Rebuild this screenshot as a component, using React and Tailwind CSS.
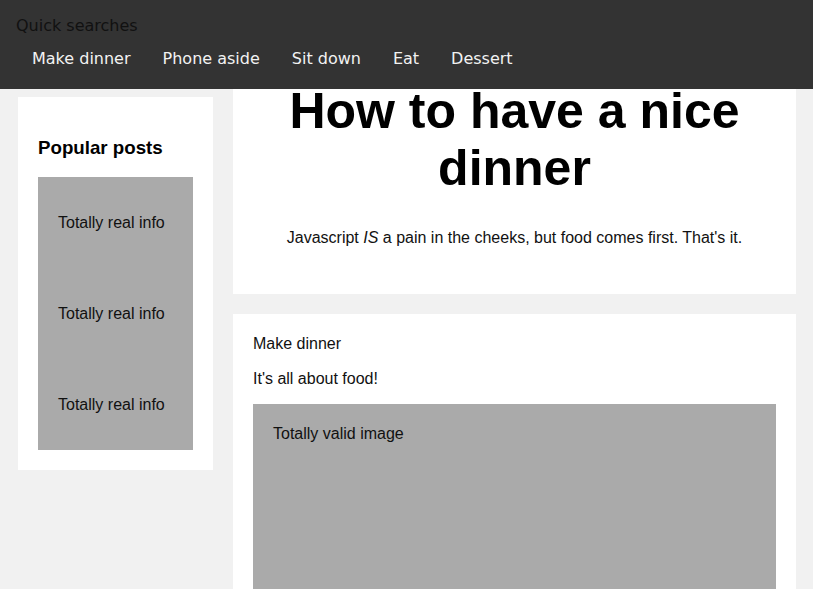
export default function App() {
  const links = ["Make dinner", "Phone aside", "Sit down", "Eat", "Dessert"];
  return (
    <div className="min-h-screen bg-[#f1f1f1] text-black font-['Liberation_Sans',Arial,sans-serif]">
      <header className="fixed top-0 left-0 right-0 z-10 h-[89px] bg-[#333333] font-['DejaVu_Sans',sans-serif] pt-[17px]">
        <div className="pl-4 text-[16px] leading-[18.6px] text-[#111111]">Quick searches</div>
        <nav className="flex pl-4">
          {links.map((l) => (
            <a key={l} className="block px-4 py-[14px] text-[16px] leading-[18.6px] text-[#f2f2f2]">
              {l}
            </a>
          ))}
        </nav>
      </header>

      <div className="flex items-start gap-5 pl-[18px] pr-[17px] pt-[29px]">
        <aside className="w-[195px] shrink-0 mt-[68px]">
          <div className="bg-white p-5">
            <h3 className="text-[18.72px] leading-[1.15] font-bold mt-[19.5px] mb-[18.5px]">Popular posts</h3>
            <div className="bg-[#aaaaaa]">
              {[0, 1, 2].map((i) => (
                <div key={i} className="h-[91px] px-5 pt-[3px] flex items-center text-[16px] leading-[1.15] text-[#111111]">
                  Totally real info
                </div>
              ))}
            </div>
          </div>
        </aside>

        <main className="flex-1 flex flex-col gap-5">
          <section className="bg-white px-5 pt-5 pb-[47px] text-center">
            <h1 className="text-[50px] leading-[1.15] font-bold mt-[33.5px] mb-[31.5px]">How to have a nice dinner</h1>
            <p className="text-[16px] leading-[1.15] text-[#111111]">
              Javascript <i>IS</i> a pain in the cheeks, but food comes first. That's it.
            </p>
          </section>

          <section className="bg-white px-5 pt-[21px] pb-5 text-[16px] leading-[1.15] text-[#111111]">
            <p>Make dinner</p>
            <p className="mt-4">It's all about food!</p>
            <div className="mt-[16px] bg-[#aaaaaa] px-5 pt-[21px] pb-5 h-[220px]">Totally valid image</div>
          </section>
        </main>
      </div>
    </div>
  );
}
